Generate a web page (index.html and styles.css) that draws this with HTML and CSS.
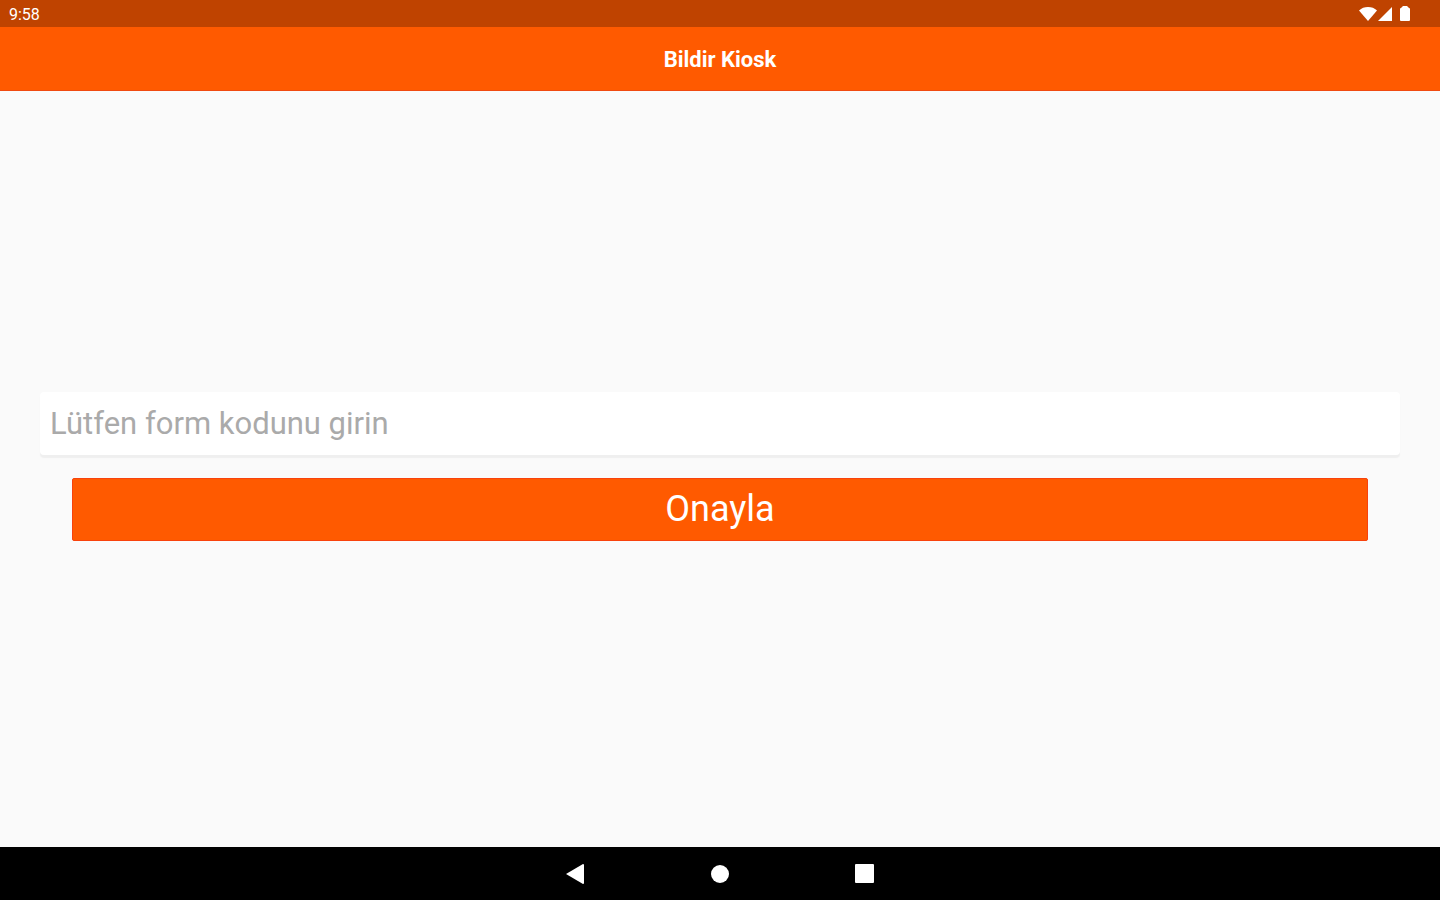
FILE: index.html
```
<!DOCTYPE html>
<html lang="tr">
<head>
    <meta charset="UTF-8">
    <meta name="viewport" content="width=device-width, initial-scale=1.0">
    <title>Bildir Kiosk</title>
    <link rel="stylesheet" href="styles.css">
</head>
<body>

    <!-- Durum çubuğu -->
    <div class="status-bar">
        <span class="clock">9:58</span>
        <div class="status-icons">
            <svg width="52" height="16" viewBox="0 0 52 16" fill="#fff" aria-hidden="true">
                <path d="M0 4.500C2.500 2 5.500 1 9 1s6.500 1 9 3.500L9 15z"/>
                <path d="M33 1v14H19z"/>
                <path d="M42 2L44 0h4l2 2q1 0 1 1v11q0 1-1 1h-8q-1 0-1-1V3q0-1 1-1z"/>
            </svg>
        </div>
    </div>

    <header class="app-bar">
        <h1>Bildir Kiosk</h1>
    </header>

    <!-- Form kodu girişi -->
    <main class="content">
        <form class="code-form" onsubmit="return false">
            <input type="text" id="formKodu" class="code-input" placeholder="Lütfen form kodunu girin" aria-label="Form kodu">
            <button type="submit" class="submit-button">Onayla</button>
        </form>
    </main>

    <!-- Gezinme tuşları -->
    <nav class="nav-bar">
        <button type="button" aria-label="Geri">
            <svg width="20" height="20" viewBox="0 0 20 20" fill="#fff"><path d="M0 10L17 0q1 0 1 1v18q0 1-1 1z"/></svg>
        </button>
        <button type="button" aria-label="Ana ekran">
            <svg width="20" height="20" viewBox="0 0 20 20" fill="#fff"><circle cx="10" cy="10" r="9"/></svg>
        </button>
        <button type="button" aria-label="Son uygulamalar">
            <svg width="20" height="20" viewBox="0 0 20 20" fill="#fff"><rect x="1" y="0" width="19" height="19" rx="1"/></svg>
        </button>
    </nav>

</body>
</html>
```
FILE: styles.css
```
* {
    box-sizing: border-box;
}
body {
    font-family: Roboto, sans-serif;
    background-color: #fafafa;
    margin: 0;
    min-height: 100vh;
    display: flex;
    flex-direction: column;
}
.status-bar {
    display: flex;
    align-items: center;
    justify-content: space-between;
    height: 27px;
    padding: 0 29px 0 9px;
    background-color: #bf4300;
    color: #fff;
}
.clock {
    font-size: 16px;
    line-height: 24px;
    padding-top: 2px;
}
.status-icons {
    display: flex;
}
.app-bar {
    display: flex;
    align-items: center;
    justify-content: center;
    height: 64px;
    padding-top: 2px;
    background-color: #ff5a00;
    border-bottom: 1px solid #f04a10;
}
.app-bar h1 {
    margin: 0;
    color: #fff;
    font-size: 22px;
    font-weight: 700;
    line-height: 28px;
}
.content {
    flex: 1;
    display: flex;
    flex-direction: column;
    justify-content: center;
    padding: 0 40px 6px;
}
.code-form {
    display: flex;
    flex-direction: column;
    gap: 23px;
}
.code-input {
    width: 100%;
    height: 63px;
    padding: 0 10px;
    border: none;
    border-radius: 4px;
    background-color: #fff;
    box-shadow: 0 3px 1px #efefef;
    font-family: inherit;
    font-size: 31px;
    color: #333;
}
.code-input::placeholder {
    color: #aaa;
    opacity: 1;
}
.submit-button {
    height: 63px;
    margin: 0 32px;
    padding: 0;
    border: 1px solid #f8420c;
    border-radius: 2px;
    background-color: #ff5a00;
    color: #fff;
    font-family: inherit;
    font-size: 36px;
    cursor: pointer;
}
.nav-bar {
    display: flex;
    align-items: center;
    justify-content: center;
    gap: 124px;
    height: 53px;
    background-color: #000;
}
.nav-bar button {
    display: flex;
    padding: 0;
    border: none;
    background: none;
    cursor: pointer;
}
```
